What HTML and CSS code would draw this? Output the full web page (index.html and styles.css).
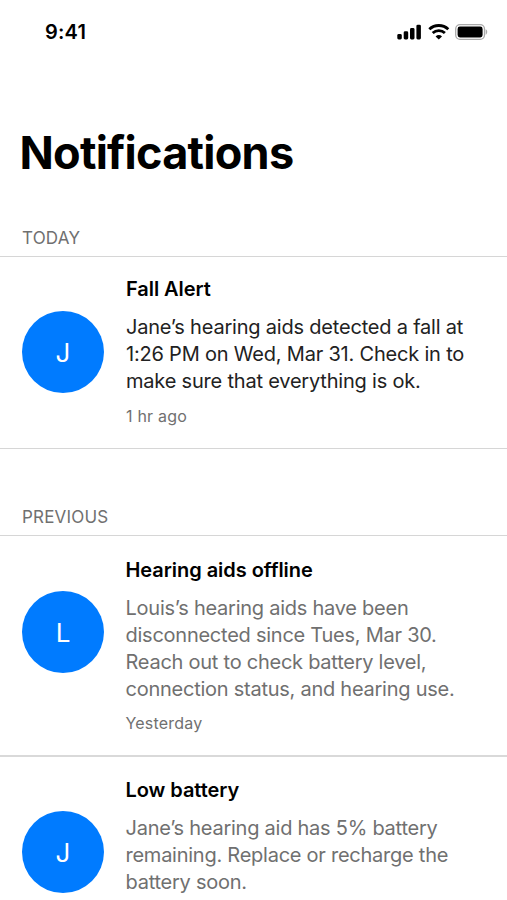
FILE: index.html
```html
<!DOCTYPE html>
<html lang="en">
  <head>
    <meta charset="UTF-8" />
    <meta name="viewport" content="width=device-width, initial-scale=1.0" />
    <title>Notifications</title>
    <link rel="stylesheet" href="styles.css">
  </head>
  <body>
    <header class="status-bar">
      <span class="time">9:41</span>
      <div class="status-icons">
        <svg class="signal" viewBox="0 0 25 16" width="25" height="16">
          <rect x="0.3" y="10" width="4.5" height="5.5" rx="1.4" />
          <rect x="6.7" y="7.3" width="4.5" height="8.2" rx="1.4" />
          <rect x="13" y="4" width="4.5" height="11.5" rx="1.4" />
          <rect x="19.4" y="0.7" width="4.5" height="14.8" rx="1.4" />
        </svg>
        <svg class="wifi" viewBox="0 0 22 16" width="22" height="16">
          <path d="M1.3 5.3a13.8 13.8 0 0 1 19 0M4.7 9a8.9 8.9 0 0 1 12.2 0" />
          <path class="dot" d="M10.8 15.6l-3.2-3.2a4.6 4.6 0 0 1 6.4 0z" />
        </svg>
        <svg class="battery" viewBox="0 0 33 16" width="33" height="16">
          <rect class="shell" x="0.7" y="0.7" width="28.8" height="14.6" rx="4.3" />
          <rect x="2.6" y="2.6" width="25" height="10.8" rx="2.3" />
          <path class="cap" d="M30.7 5.3c2 .9 2 4.5 0 5.4z" />
        </svg>
      </div>
    </header>

    <main>
      <h1>Notifications</h1>

      <section class="today">
        <h2>TODAY</h2>
        <article class="item unread">
          <div class="avatar">J</div>
          <div class="content">
            <h3>Fall Alert</h3>
            <p>Jane’s hearing aids detected a fall at<br>1:26 PM on Wed, Mar 31. Check in to<br>make sure that everything is ok.</p>
            <time>1 hr ago</time>
          </div>
        </article>
      </section>

      <section class="previous">
        <h2>PREVIOUS</h2>
        <article class="item offline">
          <div class="avatar">L</div>
          <div class="content">
            <h3>Hearing aids offline</h3>
            <p>Louis’s hearing aids have been<br>disconnected since Tues, Mar 30.<br>Reach out to check battery level,<br>connection status, and hearing use.</p>
            <time>Yesterday</time>
          </div>
        </article>
        <article class="item low">
          <div class="avatar">J</div>
          <div class="content">
            <h3>Low battery</h3>
            <p>Jane’s hearing aid has 5% battery<br>remaining. Replace or recharge the<br>battery soon.</p>
          </div>
        </article>
      </section>
    </main>
  </body>
</html>
```
FILE: styles.css
```css
* {
  margin: 0;
  padding: 0;
  box-sizing: border-box;
}
body {
  background: #fff;
  color: #000;
  font-family: "Inter", sans-serif;
}
.status-bar {
  display: flex;
  justify-content: space-between;
  align-items: center;
  height: 64px;
  padding: 0 19px 0 45px;
}
.time {
  font-size: 20px;
  font-weight: 600;
  letter-spacing: 0.2px;
}
.status-icons {
  display: flex;
  gap: 5.5px;
}
.wifi path {
  fill: none;
  stroke: #000;
  stroke-width: 2.8;
}
.wifi .dot {
  fill: #000;
  stroke: none;
}
.battery .shell {
  fill: none;
  stroke: #aaa;
  stroke-width: 1.3;
}
.battery .cap {
  fill: #aaa;
}
h1 {
  font-size: 45px;
  line-height: 54px;
  font-weight: 700;
  letter-spacing: -0.75px;
  padding: 62px 19.5px 0;
}
h2 {
  font-size: 17px;
  line-height: 20px;
  font-weight: 400;
  color: #707070;
  letter-spacing: 0.2px;
  padding-left: 22px;
}
.today {
  padding-top: 48px;
}
.previous {
  padding-top: 58px;
}
.item {
  display: flex;
  align-items: flex-start;
  gap: 21.5px;
  padding: 0 22px;
  border-top: 1px solid #d6d6d6;
}
.today .item {
  height: 193px;
  margin-top: 8px;
  gap: 22px;
  border-bottom: 1px solid #d6d6d6;
}
.offline {
  height: 220px;
  margin-top: 8px;
}
.low {
  height: 144px;
  border-top: 2px solid #d9d9d9;
}
.avatar {
  display: flex;
  justify-content: center;
  align-items: center;
  flex: none;
  width: 82px;
  height: 82px;
  margin-top: 54px;
  border-radius: 50%;
  background: #007bff;
  color: #fff;
  font-size: 26px;
}
.offline .avatar {
  margin-top: 55px;
}
.content {
  padding-top: 20px;
  white-space: nowrap;
}
.unread .content {
  padding-top: 19px;
}
.offline .content {
  padding-top: 21px;
}
h3 {
  font-size: 20px;
  line-height: 26px;
  font-weight: 600;
  letter-spacing: -0.05px;
}
p {
  margin-top: 12px;
  font-size: 20px;
  line-height: 27px;
  letter-spacing: -0.25px;
  color: #707070;
}
.unread p {
  color: #222;
  letter-spacing: -0.2px;
}
time {
  display: block;
  margin-top: 11px;
  font-size: 16px;
  line-height: 20px;
  letter-spacing: 0.2px;
  color: #707070;
}
.offline time {
  margin-top: 10px;
}
```
